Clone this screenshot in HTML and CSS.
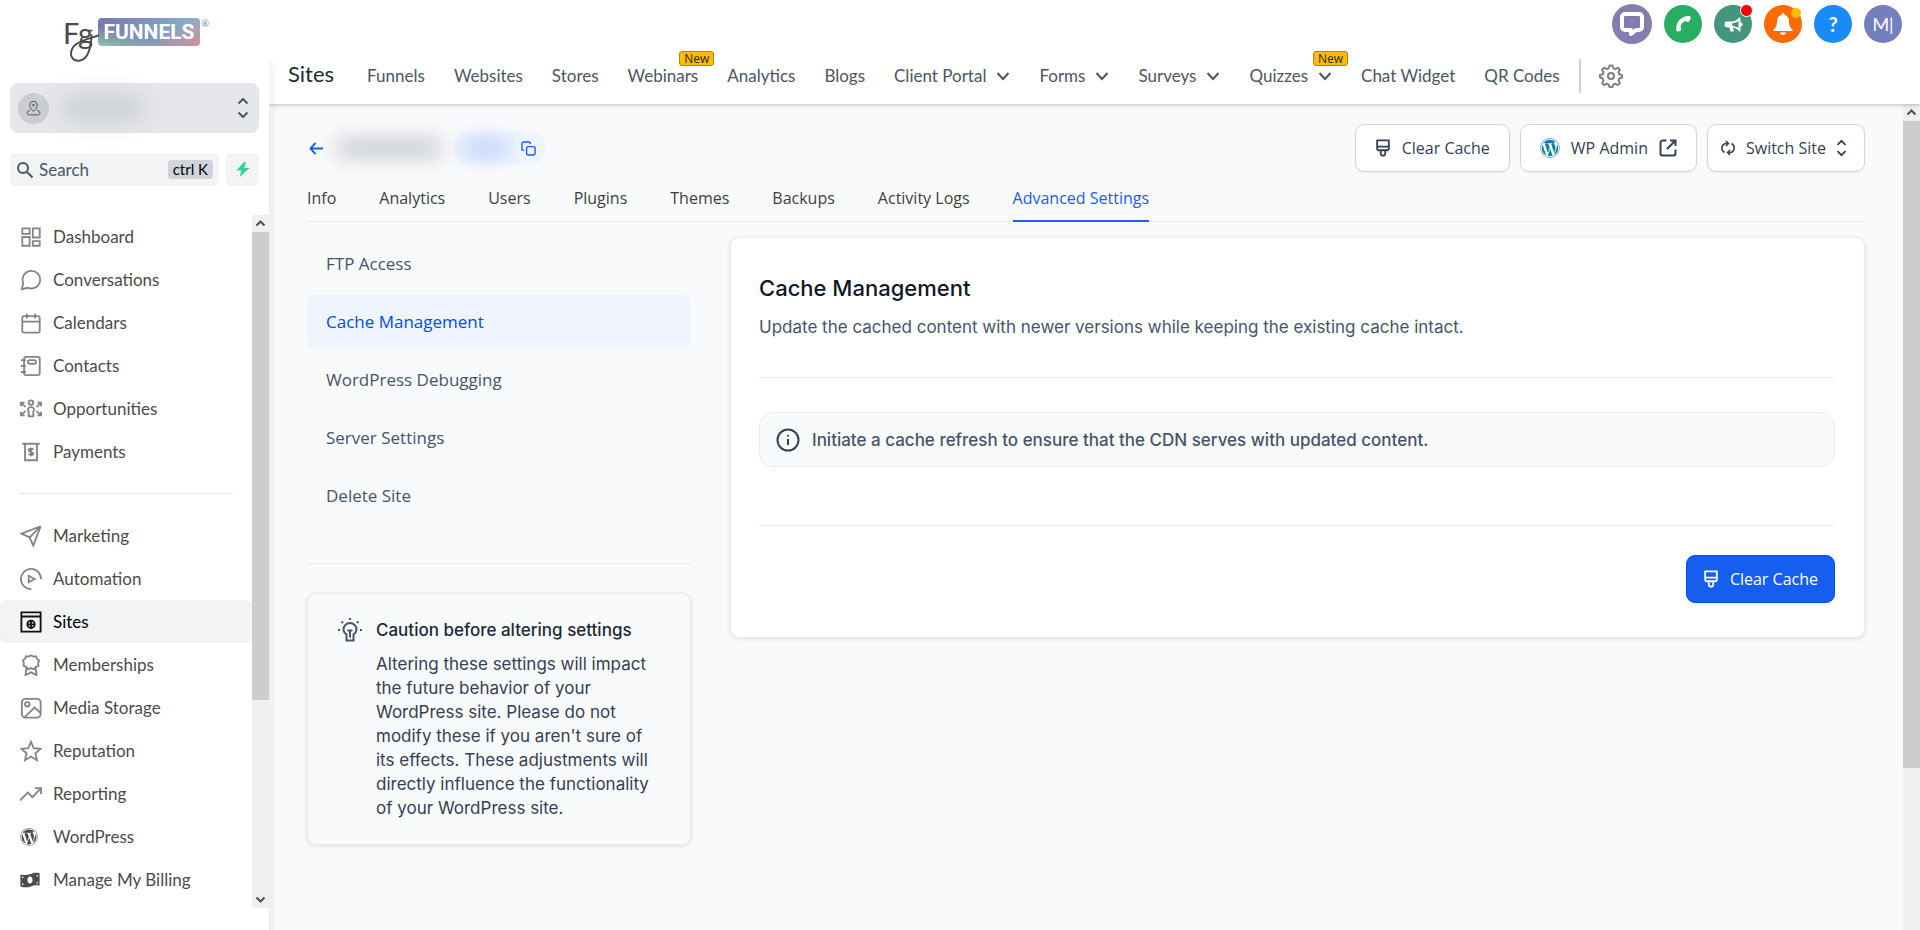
FILE: index.html
```html
<!DOCTYPE html>
<html lang="en">
<head>
  <meta charset="UTF-8">
  <meta name="viewport" content="width=device-width, initial-scale=1.0">
  <title>Sites - Cache Management</title>
  <link rel="stylesheet" href="styles.css">
</head>
<body>
  <!-- Shared icons -->
  <svg class="sprite" aria-hidden="true">
    <symbol id="i-down" viewBox="0 0 14 14"><path d="M1.5 4l5.500 6L12.500 4"/></symbol>
    <symbol id="i-updown" viewBox="0 0 12 20"><path d="M1.500 6.500L6 2l4.500 4.500M1.500 13.500L6 18l4.500-4.500"/></symbol>
    <symbol id="i-brush" viewBox="0 0 16 20"><path d="M1.500 1.500h13v9a2 2 0 0 1-2 2h-9a2 2 0 0 1-2-2zM1.500 8.500h13M5.500 12.500V16a2.500 2.500 0 0 0 5 0v-3.500"/></symbol>
    <symbol id="i-wp" viewBox="0 0 512 512"><path d="M61.7 169.4l101.5 278C92.2 413 43.3 340.2 43.3 256c0-30.9 6.6-60.1 18.4-86.6zm337.9 75.9c0-26.3-9.4-44.5-17.500-58.7-10.8-17.500-20.9-32.4-20.9-49.9 0-19.6 14.8-37.8 35.7-37.8.9 0 1.8.1 2.8.2-37.9-34.7-88.3-55.9-143.7-55.9-74.3 0-139.7 38.1-177.8 95.9 5 .2 9.7.3 13.7.3 22.2 0 56.7-2.7 56.7-2.7 11.5-.7 12.8 16.2 1.4 17.5 0 0-11.5 1.3-24.3 2l77.5 230.4L249.8 247l-33.1-90.8c-11.5-.7-22.3-2-22.3-2-11.5-.7-10.1-18.2 1.3-17.5 0 0 35.1 2.7 56 2.7 22.2 0 56.7-2.7 56.7-2.7 11.5-.7 12.8 16.2 1.4 17.5 0 0-11.5 1.3-24.3 2l76.9 228.7 21.2-70.9c9-29.4 16-50.5 16-68.7zm-139.9 29.3l-63.8 185.5c19.1 5.6 39.2 8.7 60.1 8.7 24.8 0 48.5-4.3 70.6-12.1-.6-.9-1.1-1.9-1.5-2.9l-65.4-179.2zm183-120.7c.9 6.8 1.4 14 1.4 21.9 0 21.6-4 45.8-16.2 76.2l-65 187.9C426.2 403 468.7 334.5 468.7 256c0-37-9.4-71.8-26-102.1zM504 256c0 136.8-111.3 248-248 248C119.2 504 8 392.7 8 256 8 119.2 119.2 8 256 8c136.7 0 248 111.2 248 248zm-11.4 0c0-130.5-106.2-236.6-236.6-236.6C125.5 19.4 19.4 125.5 19.4 256S125.6 492.6 256 492.6c130.5 0 236.6-106.1 236.6-236.6z"/></symbol>
  </svg>

  <div class="app">
    <aside class="sidebar">
      <a class="logo" href="#">
        <span class="logo-script">Fg
          <svg class="logo-tail" viewBox="0 0 36 32"><path d="M28 2C28 14 25 29 15 30C6 30 4 22 9 15C15 8 26 7 36 3"/></svg>
        </span>
        <span class="logo-box">FUNNELS</span>
        <span class="logo-reg">®</span>
      </a>

      <button class="account" aria-label="Switch account">
        <span class="account-pin">
          <svg viewBox="0 0 20 20"><path d="M10 13.500C7.500 11 5.500 8.500 5.500 6a4.500 4.500 0 0 1 9 0c0 2.500-2 5-4.500 7.500zM6 12.500H5c-1.500 0-2.500 1.500-2.500 3s1.500 2 3 2h9c1.500 0 3-.5 3-2s-1-3-2.500-3h-1"/><circle cx="10" cy="6" r="1"/></svg>
        </span>
        <span class="account-name"></span>
        <svg class="account-arrows" viewBox="0 0 12 20"><path d="M1.500 5.500L6 1l4.500 4.500M1.500 14.500L6 19l4.500-4.500"/></svg>
      </button>

      <div class="search-row">
        <label class="search">
          <svg viewBox="0 0 18 18"><circle cx="7" cy="7" r="5"/><path d="M11 11l5.500 5.500"/></svg>
          <input type="text" placeholder="Search" aria-label="Search">
          <kbd>ctrl K</kbd>
        </label>
        <button class="bolt" aria-label="Quick actions">
          <svg viewBox="0 0 14 16"><path d="M8 0L0 9h5l-1.500 7L14 6.500H8.500L10 0z"/></svg>
        </button>
      </div>

      <div class="menu-wrap">
        <nav class="menu">
          <a href="#"><svg viewBox="0 0 24 24"><path d="M2.500 2.500h8v6h-8zM14 2.500h7.500v10H14zM2.500 12h8v9.500h-8zM14 16.500h7.500v5H14z"/></svg>Dashboard</a>
          <a href="#"><svg viewBox="0 0 24 24"><path d="M3.500 15.500C1 9 5.500 2 12.500 2A9.500 9.500 0 0 1 22 11.500C22 18.500 15.500 23 8.500 20.500L2 22z"/></svg>Conversations</a>
          <a href="#"><svg viewBox="0 0 24 24"><rect x="2.500" y="4.500" width="19" height="18" rx="2"/><path d="M2.500 10.500h19M7.500 2v5M16.500 2v5"/></svg>Calendars</a>
          <a href="#"><svg viewBox="0 0 24 24"><rect x="4.500" y="2" width="17" height="20" rx="2"/><rect x="8.500" y="5.500" width="9" height="4" rx="2"/><path d="M1 5.500h5.500M1 12h5.500M1 18.500h5.500"/></svg>Contacts</a>
          <a href="#"><svg viewBox="0 0 24 24"><circle cx="12" cy="5" r="2.500"/><path d="M9.500 20v-5c-1.500-2-1-5 2.500-5s4 3 2.500 5v5h-5zM1 9V5h4M1 5l5 5M23 9V5h-4M23 5l-5 5M1 15v4h4M1 19l5-5M23 15v4h-4M23 19l-5-5"/></svg>Opportunities</a>
          <a href="#"><svg viewBox="0 0 24 24"><path d="M2.500 3h19M5.500 3v18h13V3M14.500 9.500c-1-1.500-5-1.500-5 .5s5 1.500 5 3.500-4 2-5 .5M12 7.500v9"/></svg>Payments</a>
          <hr>
          <a href="#"><svg viewBox="0 0 24 24"><path d="M22.500 1.500L1.500 9.500l9 4zM22.500 1.500l-8 21-4-9z"/></svg>Marketing</a>
          <a href="#"><svg viewBox="0 0 24 24"><path d="M12.500 23A11 11 0 1 1 23 12M9.500 8.500v7l6.500-3.500z"/></svg>Automation</a>
          <a class="active" href="#"><svg viewBox="0 0 24 24"><path d="M1.500 1.500h21v21h-21zM1.500 6h21M12 10v9M8 14.500h8"/><circle cx="12" cy="14.500" r="4"/></svg>Sites</a>
          <a href="#"><svg viewBox="0 0 24 24"><path d="M12 1.500l2.500 1.300 3-.3 1 2.700 2.300 2-1 2.800.3 3-2.800 1L15 16.500l-3-1.200-3 1.200L6.700 14l-2.800-1 .3-3-1-2.800 2.300-2 1-2.700 3 .3zM7 15l-1 8 6-3 6 3-1-8"/></svg>Memberships</a>
          <a href="#"><svg viewBox="0 0 24 24"><rect x="2" y="2" width="20.500" height="20.500" rx="4"/><circle cx="8" cy="8" r="2.500"/><path d="M5 22L16 11.500l6.500 6"/></svg>Media Storage</a>
          <a href="#"><svg viewBox="0 0 24 24"><path d="M12 2l3 7 7.500.6-5.700 5 1.700 7.400-6.500-4-6.500 4 1.700-7.400-5.700-5L9 9z"/></svg>Reputation</a>
          <a href="#"><svg viewBox="0 0 24 24"><path d="M0 19l8.500-8.500 5 5 9.500-10M16 5.500h7V12"/></svg>Reporting</a>
          <a href="#"><svg class="solid"><use href="#i-wp"/></svg>WordPress</a>
          <a href="#"><svg class="solid cash" viewBox="0 0 24 20"><path fill-rule="evenodd" d="M0 3c4 1.500 9 1 13-.5 4-1.500 7-2 11-1V17c-4-1-7-.5-11 1-4 1.500-9 1.500-13 0zM12 5.500c-2 0-3.200 2-3.200 4.500s1.200 4.500 3.200 4.500 3.200-2 3.200-4.500S14 5.500 12 5.500zM2 5.500v2.500L4.500 6zM2 16h2.500L2 13.500zM22 4h-2.500L22 6.500zM22 14.500V12l-2.500 2.500z"/></svg>Manage My Billing</a>
        </nav>
        <div class="scrollbar" aria-hidden="true">
          <svg viewBox="0 0 17 17"><path d="M4.500 10.500l4-4 4 4"/></svg>
          <div class="track"><div class="thumb"></div></div>
          <svg viewBox="0 0 17 17"><path d="M4.500 6.500l4 4 4-4"/></svg>
        </div>
      </div>
    </aside>

    <div class="main">
      <header class="topbar">
        <div class="quick">
          <button class="q-chat" aria-label="Chat"><svg viewBox="0 0 24 24"><path fill="none" stroke="#fff" stroke-width="4" stroke-linejoin="round" d="M5 2h14a3 3 0 0 1 3 3v10a3 3 0 0 1-3 3h-3l-5 4v-4H5a3 3 0 0 1-3-3V5a3 3 0 0 1 3-3z"/></svg></button>
          <button class="q-phone" aria-label="Phone"><svg viewBox="0 0 24 24"><path d="M19.500 2.500c-4-.5-8 1-11.500 4.500s-4.500 8-4 12c0 1.500 1 2.500 2.500 2L9 20c1-.5 1-1 .8-2L9 14.500c2-4 3.500-5 5.500-6l3 1c1 .2 1.500 0 2-.8l1.500-3c.5-1.600 0-3-1.500-3.200z"/></svg></button>
          <button class="q-news" aria-label="Announcements"><svg viewBox="0 0 24 24"><path fill-rule="evenodd" d="M3 9h7c4 0 7-2 9-4.500 1-.8 2-.5 2 1V10a2.500 2.500 0 0 1 0 5v5c0 1.200-1 1.500-2 .5-1.500-2-4-3.800-7-4.300L13 21H9l-1.500-5H4a2 2 0 0 1-2-2v-3zM11 11v3c3 .3 5.500 1.500 7.500 3V8c-2 1.800-4.500 2.800-7.500 3z"/></svg><span class="dot red"></span></button>
          <button class="q-bell" aria-label="Notifications"><svg viewBox="0 0 24 24"><path d="M12 1c1 0 1.500.7 1.500 2 3 .8 4.500 3 4.500 6.500 0 4 1 6 3.500 8v1.500h-19v-1.500C5 15.500 6 13.500 6 9.500 6 6 7.500 3.800 10.500 3c0-1.300.5-2 1.500-2zM9 20.500h6c-.4 1.800-1.500 2.500-3 2.500s-2.600-.7-3-2.500z"/></svg><span class="dot yellow"></span></button>
          <button class="q-help" aria-label="Help">?</button>
          <button class="q-user">M|</button>
        </div>
        <div class="nav-row">
          <h1>Sites</h1>
          <nav class="topnav">
            <a href="#">Funnels</a>
            <a href="#">Websites</a>
            <a href="#">Stores</a>
            <a href="#">Webinars<span class="new">New</span></a>
            <a href="#">Analytics</a>
            <a href="#">Blogs</a>
            <a href="#">Client Portal<svg><use href="#i-down"/></svg></a>
            <a href="#">Forms<svg><use href="#i-down"/></svg></a>
            <a href="#">Surveys<svg><use href="#i-down"/></svg></a>
            <a href="#">Quizzes<svg><use href="#i-down"/></svg><span class="new">New</span></a>
            <a href="#">Chat Widget</a>
            <a href="#">QR Codes</a>
          </nav>
          <button class="gear" aria-label="Settings"><svg viewBox="0 0 24 24"><path d="M10.500 1.500h3l.8 2.800 2 .8 2.600-1.400 2 2-1.400 2.600.8 2 2.700.7v2.500l-2.700 1-.8 2 1.400 2.600-2 2-2.600-1.400-2 .8-.8 2.500h-3l-.8-2.500-2-.8-2.600 1.400-2-2 1.400-2.600-.8-2-2.700-1V11l2.700-.7.8-2-1.400-2.600 2-2 2.600 1.400 2-.8z"/><circle cx="12" cy="12" r="3"/></svg></button>
        </div>
      </header>

      <div class="body-row">
        <main class="content">
          <div class="site-head">
            <a class="back" href="#" aria-label="Back"><svg viewBox="0 0 16 16"><path d="M15 8H1.500M7 2L1.500 8 7 14"/></svg></a>
            <span class="site-name"></span>
            <span class="site-url">
              <span class="url-text"></span>
              <button aria-label="Copy"><svg viewBox="0 0 16 16"><rect x="6" y="6" width="9" height="9" rx="1.500"/><path d="M3.500 10H3a2 2 0 0 1-2-2V3a2 2 0 0 1 2-2h5a2 2 0 0 1 2 2v.5"/></svg></button>
            </span>
            <div class="actions">
              <button class="btn"><svg class="brush"><use href="#i-brush"/></svg>Clear Cache</button>
              <button class="btn"><svg class="wp"><use href="#i-wp"/></svg>WP Admin<svg class="ext" viewBox="0 0 18 18"><path d="M7.500 1.500h-4a2 2 0 0 0-2 2v11a2 2 0 0 0 2 2h11a2 2 0 0 0 2-2v-4M11 1.500h5.500V7M16 2L8 10"/></svg></button>
              <button class="btn switch"><svg class="cycle" viewBox="0 0 16 16"><path d="M4.500 12.500A4.800 4.800 0 0 1 5.500 3.500H8M6 1l2.500 2.500L6 6M11.500 3.500a4.800 4.800 0 0 1-1 9H8M10 10l-2.500 2.500L10 15"/></svg>Switch Site<svg class="updown"><use href="#i-updown"/></svg></button>
            </div>
          </div>

          <nav class="tabs">
            <a href="#">Info</a>
            <a href="#">Analytics</a>
            <a href="#">Users</a>
            <a href="#">Plugins</a>
            <a href="#">Themes</a>
            <a href="#">Backups</a>
            <a href="#">Activity Logs</a>
            <a class="active" href="#">Advanced Settings</a>
          </nav>

          <div class="panels">
            <div class="left">
              <nav class="submenu">
                <a href="#">FTP Access</a>
                <a class="active" href="#">Cache Management</a>
                <a href="#">WordPress Debugging</a>
                <a href="#">Server Settings</a>
                <a href="#">Delete Site</a>
              </nav>
              <section class="caution">
                <svg viewBox="0 0 24 24"><path d="M8.500 18.500v-2C6.500 15 5.500 13.500 5.500 11.500a6.500 6.500 0 0 1 13 0c0 2-1 3.500-3 5v6h-7zM12 0v2M0 12h2M22 12h2M3.500 3.500L5 5M20.500 3.500L19 5M9.500 12.500h5M12 12.500v7"/></svg>
                <div>
                  <h3>Caution before altering settings</h3>
                  <p>Altering these settings will impact the future behavior of your WordPress site. Please do not modify these if you aren't sure of its effects. These adjustments will directly influence the functionality of your WordPress site.</p>
                </div>
              </section>
            </div>

            <section class="card">
              <h2>Cache Management</h2>
              <p class="desc">Update the cached content with newer versions while keeping the existing cache intact.</p>
              <div class="alert">
                <svg viewBox="0 0 24 24"><circle cx="12" cy="12" r="10.500"/><path d="M12 11v6M12 7v1.500"/></svg>
                Initiate a cache refresh to ensure that the CDN serves with updated content.
              </div>
              <div class="card-foot">
                <button class="btn primary"><svg class="brush"><use href="#i-brush"/></svg>Clear Cache</button>
              </div>
            </section>
          </div>
        </main>
        <div class="scrollbar page" aria-hidden="true">
          <svg viewBox="0 0 17 17"><path d="M4.500 10.500l4-4 4 4"/></svg>
          <div class="track"><div class="thumb"></div></div>
        </div>
      </div>
    </div>
  </div>
</body>
</html>
```
FILE: styles.css
```css
* {
  box-sizing: border-box;
}
body {
  margin: 0;
  font-family: Lato, sans-serif;
  background: #fff;
  color: #4b4b4b;
}
h1, h2, h3, p {
  margin: 0;
}
a {
  color: inherit;
  text-decoration: none;
}
button {
  font: inherit;
  border: none;
  padding: 0;
  cursor: pointer;
}
svg {
  flex: none;
  fill: none;
  stroke: currentColor;
}
.sprite {
  display: none;
}
.app {
  display: flex;
  height: 100vh;
  overflow: hidden;
}

/* Sidebar */
.sidebar {
  width: 269px;
  flex: none;
  display: flex;
  flex-direction: column;
  background: #fff;
  padding-bottom: 22px;
  position: relative;
  z-index: 2;
  box-shadow: 3px 62px 8px rgba(16, 24, 40, 0.07);
}
.logo {
  display: flex;
  height: 65px;
  padding: 18px 0 0 63px;
  color: #4a4a4a;
}
.logo-script {
  position: relative;
  width: 35px;
  font-size: 29px;
  line-height: 30px;
}
.logo-tail {
  position: absolute;
  left: 2px;
  top: 14px;
  width: 34px;
  height: 31px;
  stroke-width: 2;
}
.logo-box {
  height: 28px;
  width: 102px;
  border-radius: 4px;
  background: linear-gradient(15deg, #8fc7a8 0%, transparent 35%), linear-gradient(-30deg, #d58a9c 0%, transparent 40%), linear-gradient(90deg, #7b76ad, #86b4cf);
  color: #fff;
  font: bold 21px/28px Roboto, sans-serif;
  text-align: center;
}
.logo-reg {
  font-size: 10px;
  line-height: 10px;
  color: #6f9aa8;
  margin-left: 1px;
}
.account {
  display: flex;
  align-items: center;
  height: 50px;
  margin: 18px 10px 20px;
  padding: 0 10px 0 8px;
  border-radius: 8px;
  background: #e5e7eb;
  color: #4b5563;
}
.account-pin {
  display: grid;
  place-items: center;
  width: 31px;
  height: 31px;
  border-radius: 50%;
  background: #cccdcf;
}
.account-pin svg {
  width: 17px;
  height: 17px;
  stroke: #374151;
}
.account-name {
  width: 80px;
  height: 24px;
  margin: 0 auto 0 14px;
  background: #cbced3;
  filter: blur(11px);
}
.account-arrows {
  width: 12px;
  height: 20px;
  stroke-width: 2;
}
.search-row {
  display: flex;
  gap: 7px;
  margin: 0 10px 29px;
}
.search {
  flex: 1;
  min-width: 0;
  display: flex;
  align-items: center;
  height: 33px;
  padding: 0 6px;
  border-radius: 5px;
  background: #f3f4f6;
}
.search svg {
  width: 18px;
  height: 18px;
  stroke: #4b5563;
  stroke-width: 2;
}
.search input {
  flex: 1;
  min-width: 0;
  border: none;
  background: none;
  padding: 0 0 0 5px;
  font: 17px Lato, sans-serif;
}
.search input::placeholder {
  color: #4b5563;
}
kbd {
  flex: none;
  padding: 0 5px;
  border-radius: 3px;
  background: #d1d5db;
  color: #000;
  font: 15px/19px Lato, sans-serif;
}
.bolt {
  flex: none;
  display: grid;
  place-items: center;
  width: 33px;
  border-radius: 5px;
  background: #f3f4f6;
}
.bolt svg {
  width: 14px;
  height: 15px;
  fill: #34d399;
  stroke: none;
}
.menu-wrap {
  flex: 1;
  min-height: 0;
  display: flex;
}
.menu {
  flex: 1;
  overflow: hidden;
}
.menu a {
  display: flex;
  align-items: center;
  height: 43px;
  gap: 11px;
  padding-left: 20px;
  border-radius: 6px;
  font-size: 17px;
  color: #4b4b4b;
}
.menu svg {
  width: 22px;
  height: 22px;
  stroke: #858585;
  stroke-width: 2;
}
.menu svg.solid {
  width: 18px;
  height: 18px;
  margin-right: 4px;
  fill: #4b4b4b;
  stroke: none;
}
.menu svg.cash {
  width: 20px;
  height: 16px;
  margin-right: 2px;
}
.menu a.active {
  background: #f2f3f5;
  color: #000;
}
.menu a.active svg {
  stroke: #111;
}
.menu hr {
  height: 1px;
  margin: 20px 19px;
  border: none;
  background: #e5e5e5;
}

/* Scrollbars */
.scrollbar {
  display: flex;
  flex-direction: column;
  flex: none;
  width: 17px;
  background: #f0f0f0;
}
.scrollbar svg {
  width: 17px;
  height: 17px;
  stroke: #505050;
  stroke-width: 2;
}
.track {
  flex: 1;
}
.thumb {
  height: 71%;
  background: #cdcdcd;
}
.page .thumb {
  height: 80%;
}

/* Top bar */
.main {
  flex: 1;
  min-width: 0;
  display: flex;
  flex-direction: column;
}
.topbar {
  position: relative;
  z-index: 1;
  background: #fff;
  box-shadow: 0 1px 4px rgba(30, 50, 60, 0.3);
}
.quick {
  display: flex;
  justify-content: flex-end;
  align-items: center;
  gap: 12px;
  height: 44px;
  padding: 4px 18px 0 0;
}
.quick button {
  position: relative;
  display: grid;
  place-items: center;
  width: 38px;
  height: 38px;
  border-radius: 50%;
  color: #fff;
}
.quick svg {
  width: 20px;
  height: 20px;
  fill: #fff;
  stroke: none;
}
.quick .q-chat {
  width: 40px;
  height: 40px;
  background: #857dae;
}
.quick .q-chat svg,
.quick .q-bell svg {
  width: 24px;
  height: 24px;
}
.quick .q-phone {
  background: #27ae60;
}
.quick .q-news {
  background: #44957e;
}
.quick .q-bell {
  background: #ff6a00;
}
.quick .q-help {
  background: #188bf6;
  font: bold 20px Lato, sans-serif;
}
.quick .q-user {
  background: #7380bd;
  font-size: 18px;
}
.dot {
  position: absolute;
  top: -1px;
  right: -1px;
  width: 13px;
  height: 13px;
  border-radius: 50%;
  border: 1px solid #fff;
  background: #f00;
}
.dot.yellow {
  top: 3px;
  right: 1px;
  width: 10px;
  height: 10px;
  border: none;
  background: #ffbc00;
}
.nav-row {
  display: flex;
  align-items: center;
  height: 60px;
  padding: 4px 0 0 19px;
}
.nav-row h1 {
  padding-bottom: 5px;
  font-size: 22px;
  font-weight: 400;
  color: #1f2937;
}
.topnav {
  display: flex;
  gap: 29px;
  padding: 0 19px 0 33px;
}
.topnav a {
  position: relative;
  display: flex;
  align-items: center;
  gap: 10px;
  font-size: 17px;
  line-height: 24px;
  white-space: nowrap;
  color: #4b5563;
}
.topnav svg {
  width: 14px;
  height: 14px;
  stroke-width: 2;
}
.new {
  position: absolute;
  right: -16px;
  top: -13px;
  width: 35px;
  height: 15px;
  border: 1px solid #b08611;
  border-radius: 3px;
  background: #ffbc00;
  color: #1f2937;
  font: 12px/13px "Open Sans", sans-serif;
  text-align: center;
}
.gear {
  display: flex;
  align-items: center;
  height: 34px;
  padding-left: 18px;
  border-left: 2px solid #d0d0d0;
  background: none;
  color: #808080;
}
.gear svg {
  width: 24px;
  height: 24px;
  stroke-width: 2;
  stroke-linejoin: round;
}

/* Content */
.body-row {
  flex: 1;
  min-height: 0;
  display: flex;
  background: #f9fafc;
}
.content {
  flex: 1;
  min-width: 0;
  padding: 20px 38px;
  font-family: "Open Sans", sans-serif;
}
.site-head {
  display: flex;
  align-items: center;
  height: 48px;
}
.back {
  display: flex;
  padding-left: 2px;
  color: #155eef;
}
.back svg,
.site-url svg {
  width: 15px;
  height: 15px;
  stroke-width: 2;
}
.site-url svg {
  stroke-width: 1.500;
}
.site-name {
  width: 104px;
  height: 20px;
  margin: 0 13px;
  background: #cbced2;
  filter: blur(10px);
}
.site-url {
  display: flex;
  align-items: center;
  justify-content: space-between;
  width: 92px;
  height: 34px;
  padding: 0 10px;
  border-radius: 17px;
  background: #eff4ff;
}
.url-text {
  width: 44px;
  height: 22px;
  background: #c8d8fb;
  filter: blur(9px);
}
.site-url button {
  display: flex;
  background: none;
  color: #155eef;
}
.actions {
  display: flex;
  gap: 10px;
  margin-left: auto;
}
.btn {
  display: flex;
  align-items: center;
  height: 48px;
  gap: 11px;
  padding: 0 19px;
  border: 1px solid #d0d5dd;
  border-radius: 9px;
  background: #fff;
  box-shadow: 0 1px 2px rgba(16, 24, 40, 0.05);
  color: #344054;
  font-size: 16px;
  white-space: nowrap;
}
.btn svg {
  stroke-width: 2;
}
.brush {
  width: 16px;
  height: 18px;
}
.btn .wp {
  width: 20px;
  height: 20px;
  fill: #117ea8;
  stroke: none;
}
.ext {
  width: 18px;
  height: 18px;
}
.btn.switch {
  padding: 0 17px 0 12px;
  gap: 10px;
}
.btn .cycle {
  width: 16px;
  height: 16px;
  stroke-width: 1.500;
}
.updown {
  width: 11px;
  height: 18px;
}
.tabs {
  display: flex;
  gap: 43px;
  height: 50px;
  border-bottom: 1px solid #eaecf0;
  color: #3f3f3f;
  font-size: 16px;
}
.tabs a {
  padding-top: 15px;
  height: 50px;
}
.tabs .active {
  color: #155eef;
  border-bottom: 2px solid #155eef;
}
.panels {
  display: grid;
  grid-template-columns: 384px 1fr;
  gap: 39px;
  align-items: start;
  margin-top: 15px;
}
.submenu {
  display: flex;
  flex-direction: column;
  gap: 5px;
  padding-bottom: 41px;
  border-bottom: 1px solid #eaecf0;
  color: #475467;
}
.submenu a {
  height: 53px;
  padding-left: 19px;
  border-radius: 7px;
  line-height: 53px;
  font-size: 17px;
}
.submenu .active {
  background: #eff4ff;
  color: #004eeb;
}
.caution,
.card {
  border: 1px solid #eaecf0;
  border-radius: 9px;
  box-shadow: 0 1px 4px rgba(16, 24, 40, 0.12);
  font-family: Inter, sans-serif;
}
.caution {
  display: flex;
  gap: 14px;
  margin-top: 29px;
  padding: 24px 34px 24px 30px;
  color: #344054;
}
.caution svg {
  width: 24px;
  height: 24px;
  stroke: #475467;
  stroke-width: 2;
}
.caution h3 {
  margin-bottom: 10px;
  font-size: 17px;
  line-height: 24px;
  font-weight: 500;
  color: #1d2939;
}
.caution p {
  font-size: 17px;
  line-height: 24px;
}
.card {
  padding: 37px 29px 34px 28px;
  background: #fff;
}
.card h2 {
  font-size: 22px;
  line-height: 26px;
  font-weight: 500;
  color: #101828;
}
.desc {
  padding: 14px 0 38px;
  border-bottom: 1px solid #eaecf0;
  font-size: 17px;
  line-height: 24px;
  color: #475467;
}
.alert {
  display: flex;
  align-items: center;
  gap: 12px;
  height: 55px;
  margin: 34px 0 58px;
  padding: 0 16px;
  border: 1px solid #eaecf0;
  border-radius: 14px;
  background: #f9fafc;
  font-size: 17px;
  font-weight: 500;
  color: #475467;
}
.alert svg {
  width: 24px;
  height: 24px;
  stroke: #344054;
  stroke-width: 2;
}
.card-foot {
  display: flex;
  justify-content: flex-end;
  padding-top: 29px;
  border-top: 1px solid #eaecf0;
}
.btn.primary {
  padding: 0 16px;
  border-color: #004eeb;
  background: #155eef;
  color: #fff;
  font-family: "Open Sans", sans-serif;
}
```
